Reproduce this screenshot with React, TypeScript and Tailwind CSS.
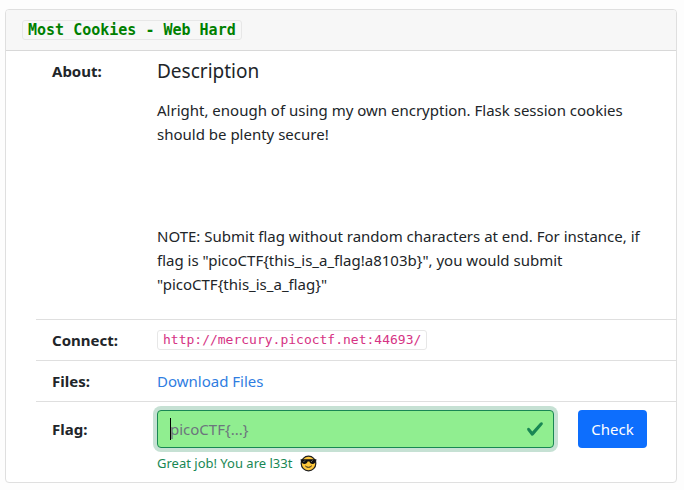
import { useState } from "react";
import type { ReactNode } from "react";

type Challenge = {
  title: string;
  description: string;
  note: string;
  url: string;
  files: string;
};

const challenge: Challenge = {
  title: "Most Cookies - Web Hard",
  description:
    "Alright, enough of using my own encryption. Flask session cookies should be plenty secure!",
  note: 'NOTE: Submit flag without random characters at end. For instance, if flag is "picoCTF{this_is_a_flag!a8103b}", you would submit "picoCTF{this_is_a_flag}"',
  url: "http://mercury.picoctf.net:44693/",
  files: "#files",
};

function CheckIcon() {
  return (
    <svg
      viewBox="0 0 8 8"
      className="pointer-events-none absolute right-2.5 top-2.5 size-[18px]"
      aria-hidden="true"
    >
      <path
        fill="#198754"
        d="M2.3 6.73.6 4.53c-.4-1.04.46-1.4 1.1-.8l1.1 1.4 3.4-3.8c.6-.63 1.6-.27 1.2.7l-4 4.6c-.43.5-.8.4-1.1.1z"
      />
    </svg>
  );
}

function SunglassesEmoji() {
  return (
    <svg viewBox="0 0 17 17" className="size-[17px]" role="img" aria-label="cool">
      <circle cx="8.5" cy="8.5" r="7.3" fill="#ffc83d" stroke="#1f1f1f" strokeWidth="1.2" />
      <path
        fill="#111"
        d="M.6 4.2h15.8v1.4l-1 .5c-.1 2-1.1 2.9-2.8 2.9-1.8 0-2.9-.9-3.2-2.5H7.6C7.3 8.1 6.2 9 4.4 9 2.7 9 1.7 8.1 1.6 6.1l-1-.5z"
      />
      <path d="M3.4 7 5 5.4M11 7l1.6-1.6" stroke="#8a8a8a" strokeWidth=".8" />
      <path
        d="M5.6 11.3c1.4 1.5 4.4 1.5 5.9-.2"
        fill="none"
        stroke="#1f1f1f"
        strokeWidth="1"
        strokeLinecap="round"
      />
    </svg>
  );
}

function Row({ label, children }: { label: ReactNode; children: ReactNode }) {
  return (
    <li className="flex px-4 py-2">
      <div className="w-[105px] shrink-0 font-bold">{label}</div>
      <div className="min-w-0 flex-1">{children}</div>
    </li>
  );
}

export default function App() {
  const [flag, setFlag] = useState("");

  return (
    <main className="min-h-screen bg-[#fdfdfd] py-[9px] pl-[5px] pr-[7px] font-['Noto_Sans',sans-serif] text-[15px] leading-6 text-[#212529]">
      <section className="overflow-hidden rounded border border-[#dfdfdf] bg-white">
        {/* Header */}
        <header className="flex h-[41px] items-center border-b border-[#d8d8d8] bg-[#f7f7f7] px-4">
          <h1 className="flex">
            <code className="rounded-[3px] border border-[#e7e7e7] px-[5px] font-['DejaVu_Sans_Mono',monospace] text-[15px] font-bold leading-[18px] text-[#008000]">
              {challenge.title}
            </code>
          </h1>
        </header>

        {/* Details */}
        <ul className="ml-[30px] divide-y divide-[#dfdfdf]">
          <Row label="About:">
            <h2 className="mb-[15px] text-[19px] leading-6">Description</h2>
            <div className="mb-[15px] pr-3">
              <p className="mb-[78px]">{challenge.description}</p>
              <p>{challenge.note}</p>
            </div>
          </Row>

          <Row label="Connect:">
            <div className="flex h-6 items-center">
              <code className="rounded-[3px] border border-[#e7e7e7] px-[5px] font-['DejaVu_Sans_Mono',monospace] text-[13px] leading-[18px] text-[#d63384]">
                {challenge.url}
              </code>
            </div>
          </Row>

          <Row label="Files:">
            <a href={challenge.files} className="text-[#2f7de1]">
              Download Files
            </a>
          </Row>

          <Row
            label={
              <label htmlFor="flag" className="block py-[7px]">
                Flag:
              </label>
            }
          >
            <form
              className="flex items-start gap-6 pr-[13px]"
              onSubmit={(e) => e.preventDefault()}
            >
              <div className="min-w-0 flex-1">
                <div className="relative">
                  <input
                    id="flag"
                    value={flag}
                    onChange={(e) => setFlag(e.target.value)}
                    placeholder="picoCTF{...}"
                    aria-describedby="flag-feedback"
                    className="block h-[38px] w-full rounded border border-[#198754] bg-[#90ee90] pl-3 pr-10 ring-4 ring-[#c6e1d4] outline-none placeholder:text-[#6c757d]"
                  />
                  {/* Caret */}
                  {!flag && (
                    <span className="pointer-events-none absolute left-[13px] top-2 h-[22px] w-px bg-black" />
                  )}
                  <CheckIcon />
                </div>
                <p
                  id="flag-feedback"
                  className="mt-1 flex items-center gap-2 text-[13px] leading-[22px] text-[#198754]"
                >
                  Great job! You are l33t <SunglassesEmoji />
                </p>
              </div>
              <button
                type="submit"
                className="h-[38px] w-[69px] rounded bg-[#0d6efd] text-white"
              >
                Check
              </button>
            </form>
          </Row>
        </ul>
      </section>
    </main>
  );
}
